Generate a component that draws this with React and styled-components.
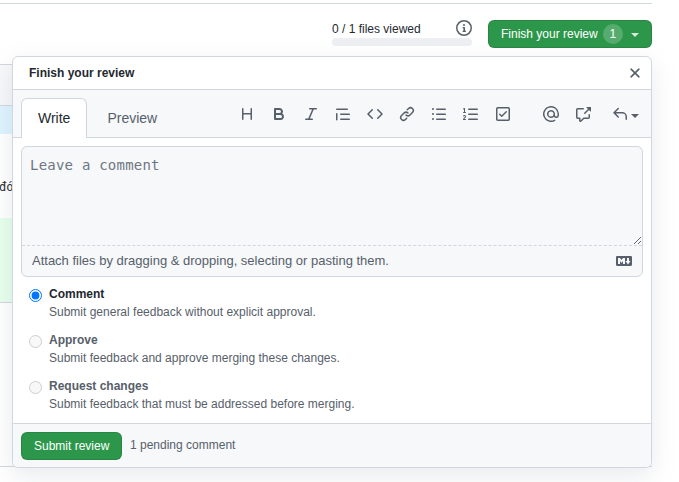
import React from "react";
import styled, { createGlobalStyle } from "styled-components";

const color = {
  fg: "#24292f",
  muted: "#57606a",
  border: "#d0d7de",
  subtle: "#f6f8fa",
  green: "#2c974b",
};

const GlobalStyle = createGlobalStyle`
  * { box-sizing: border-box; }
  body {
    margin: 0;
    background: #fff;
    color: ${color.fg};
    font: 12px/18px "Liberation Sans", Arial, sans-serif;
    overflow: hidden;
  }
`;

const PATHS = {
  info: "M8 1.5a6.5 6.5 0 100 13 6.5 6.5 0 000-13zM0 8a8 8 0 1116 0A8 8 0 010 8zm6.5-.25A.75.75 0 017.25 7h1a.75.75 0 01.75.75v2.75h.25a.75.75 0 010 1.5h-2a.75.75 0 010-1.5h.25v-2h-.25a.75.75 0 01-.75-.75zM8 6a1 1 0 100-2 1 1 0 000 2z",
  x: "M3.72 3.72a.75.75 0 011.06 0L8 6.94l3.22-3.22a.75.75 0 111.06 1.06L9.06 8l3.22 3.22a.75.75 0 11-1.06 1.06L8 9.06l-3.22 3.22a.75.75 0 01-1.06-1.06L6.94 8 3.72 4.78a.75.75 0 010-1.06z",
  heading: "M3.75 2a.75.75 0 01.75.75V7h7V2.75a.75.75 0 011.5 0v10.5a.75.75 0 01-1.5 0V8.5h-7v4.75a.75.75 0 01-1.5 0V2.75A.75.75 0 013.75 2z",
  bold: "M4 2a1 1 0 00-1 1v10a1 1 0 001 1h5.5a3.5 3.5 0 001.852-6.47A3.5 3.5 0 008.5 2H4zm4.5 5a1.5 1.5 0 100-3H5v3h3.5zM5 9v3h4.5a1.5 1.5 0 000-3H5z",
  italic: "M6 2.75A.75.75 0 016.75 2h6.5a.75.75 0 010 1.5h-2.505l-3.858 9H9.25a.75.75 0 010 1.5h-6.5a.75.75 0 010-1.5h2.505l3.858-9H6.75A.75.75 0 016 2.75z",
  quote: "M1.75 2.5a.75.75 0 000 1.5h10.5a.75.75 0 000-1.5H1.75zm4 5a.75.75 0 000 1.5h8.5a.75.75 0 000-1.5h-8.5zm0 5a.75.75 0 000 1.5h8.5a.75.75 0 000-1.5h-8.5zM2.5 7.75a.75.75 0 00-1.5 0v6a.75.75 0 001.5 0v-6z",
  code: "M4.72 3.22a.75.75 0 011.06 1.06L2.06 8l3.72 3.72a.75.75 0 11-1.06 1.06L.47 8.53a.75.75 0 010-1.06l4.25-4.25zm6.56 0a.75.75 0 10-1.06 1.06L13.94 8l-3.72 3.72a.75.75 0 101.06 1.06l4.25-4.25a.75.75 0 000-1.06l-4.25-4.25z",
  link: "M7.775 3.275a.75.75 0 001.06 1.06l1.25-1.25a2 2 0 112.83 2.83l-2.5 2.5a2 2 0 01-2.83 0 .75.75 0 00-1.06 1.06 3.5 3.5 0 004.95 0l2.5-2.5a3.5 3.5 0 00-4.95-4.95l-1.25 1.25zm-4.69 9.64a2 2 0 010-2.83l2.5-2.5a2 2 0 012.83 0 .75.75 0 001.06-1.06 3.5 3.5 0 00-4.95 0l-2.5 2.5a3.5 3.5 0 004.95 4.95l1.25-1.25a.75.75 0 00-1.06-1.06l-1.25 1.25a2 2 0 01-2.83 0z",
  bullets: "M2 4a1 1 0 100-2 1 1 0 000 2zm3.75-1.5a.75.75 0 000 1.5h8.5a.75.75 0 000-1.5h-8.5zm0 5a.75.75 0 000 1.5h8.5a.75.75 0 000-1.5h-8.5zm0 5a.75.75 0 000 1.5h8.5a.75.75 0 000-1.5h-8.5zM3 8a1 1 0 11-2 0 1 1 0 012 0zm-1 6a1 1 0 100-2 1 1 0 000 2z",
  numbers: "M2.003 2.5a.5.5 0 00-.723-.447l-1.003.5a.5.5 0 00.446.895l.28-.14V6H.5a.5.5 0 000 1h2.006a.5.5 0 100-1h-.503V2.5zM5 3.25a.75.75 0 01.75-.75h8.5a.75.75 0 010 1.5h-8.5A.75.75 0 015 3.25zm0 5a.75.75 0 01.75-.75h8.5a.75.75 0 010 1.5h-8.5A.75.75 0 015 8.25zm0 5a.75.75 0 01.75-.75h8.5a.75.75 0 010 1.5h-8.5a.75.75 0 01-.75-.75zM.924 10.32l.003-.004a.851.851 0 01.144-.153A.66.66 0 011.5 10c.195 0 .306.068.374.146a.57.57 0 01.128.376c0 .453-.269.682-.8 1.078l-.035.025C.692 11.98 0 12.495 0 13.5a.5.5 0 00.5.5h2.003a.5.5 0 000-1H1.146c.132-.197.351-.372.654-.597l.047-.035c.47-.35 1.156-.858 1.156-1.845 0-.365-.118-.744-.377-1.038-.268-.303-.658-.484-1.126-.484-.48 0-.84.202-1.068.392a1.858 1.858 0 00-.348.384l-.007.011a.5.5 0 00.847.533z",
  tasks: "M2.5 2.75a.25.25 0 01.25-.25h10.5a.25.25 0 01.25.25v10.5a.25.25 0 01-.25.25H2.75a.25.25 0 01-.25-.25V2.75zM2.75 1A1.75 1.75 0 001 2.75v10.5c0 .966.784 1.75 1.75 1.75h10.5A1.75 1.75 0 0015 13.25V2.75A1.75 1.75 0 0013.25 1H2.75zm9.03 5.28a.75.75 0 00-1.06-1.06L6.75 9.19 5.28 7.72a.75.75 0 00-1.06 1.06l2 2a.75.75 0 001.06 0l4.5-4.5z",
  mention: "M4.75 2.37a6.5 6.5 0 006.5 11.26.75.75 0 01.75 1.298 8 8 0 113.994-7.273.754.754 0 01.006.095v1.5a2.75 2.75 0 01-5.072 1.475A4 4 0 1112 8v1.25a1.25 1.25 0 002.5 0V7.867a6.5 6.5 0 00-9.75-5.496V2.37zM10.5 8a2.5 2.5 0 10-5 0 2.5 2.5 0 005 0z",
  reference: "M16 1.25v4.146a.25.25 0 01-.427.177L14.03 4.03l-3.75 3.75a.75.75 0 11-1.06-1.06l3.75-3.75-1.543-1.543A.25.25 0 0111.604 1h4.146a.25.25 0 01.25.25zM2.75 3.5a.25.25 0 00-.25.25v7.5c0 .138.112.25.25.25h2a.75.75 0 01.75.75v2.19l2.72-2.72a.75.75 0 01.53-.22h4.5a.25.25 0 00.25-.25v-2.5a.75.75 0 111.5 0v2.5A1.75 1.75 0 0113.25 13H9.06l-2.573 2.573A1.457 1.457 0 014 14.543V13H2.75A1.75 1.75 0 011 11.25v-7.5C1 2.784 1.784 2 2.75 2h5.5a.75.75 0 010 1.5h-5.5z",
  reply: "M6.78 1.97a.75.75 0 010 1.06L3.81 6h6.44A4.75 4.75 0 0115 10.75v2.5a.75.75 0 01-1.5 0v-2.5a3.25 3.25 0 00-3.25-3.25H3.81l2.97 2.97a.75.75 0 11-1.06 1.06L1.47 7.28a.75.75 0 010-1.06l4.25-4.25a.75.75 0 011.06 0z",
  markdown: "M14.85 3H1.15C.52 3 0 3.52 0 4.15v7.69C0 12.48.52 13 1.15 13h13.69c.64 0 1.15-.52 1.15-1.15v-7.7C16 3.52 15.48 3 14.85 3zM9 11H7V8L5.5 9.92 4 8v3H2V5h2l1.5 2L7 5h2v6zm2.99.5L9.5 8H11V5h2v3h1.5l-2.51 3.5z",
};

const Svg = styled.svg`
  display: block;
  flex: none;
  fill: ${color.muted};
  stroke: ${color.muted};
  stroke-width: ${(p) => (p.$heavy ? 0.35 : 0)};
`;

function Icon({ name, heavy }) {
  return (
    <Svg $heavy={heavy} width="16" height="16" viewBox="0 0 16 16" aria-hidden="true">
      <path fillRule="evenodd" d={PATHS[name]} />
    </Svg>
  );
}

const Page = styled.div`
  position: relative;
  width: 679px;
  height: 482px;
  overflow: hidden;
`;

const TopBar = styled.header`
  display: flex;
  justify-content: flex-end;
  gap: 16px;
  width: 652px;
  height: 61px;
  margin-top: 3px;
  padding-top: 16px;
  border-top: 1px solid ${color.border};
`;

const Viewed = styled.div`
  width: 140px;
`;

const ViewedRow = styled.div`
  display: flex;
  justify-content: space-between;
  height: 18px;
`;

const Progress = styled.div`
  height: 8px;
  border-radius: 6px;
  background: #eeeff2;
`;

const GreenButton = styled.button`
  display: flex;
  align-items: center;
  width: ${(p) => p.$width}px;
  height: 28px;
  padding: 0 12px;
  border: 1px solid rgba(27, 31, 36, 0.15);
  border-radius: 6px;
  background: ${color.green};
  color: #fff;
  font: inherit;
  line-height: 20px;
  white-space: nowrap;
`;

const Counter = styled.span`
  width: 21px;
  height: 20px;
  margin-left: 5px;
  border-radius: 20px;
  background: rgba(255, 255, 255, 0.2);
  text-align: center;
`;

const Caret = styled.span`
  width: 0;
  height: 0;
  margin: ${(p) => p.$drop}px 0 0 ${(p) => p.$gap}px;
  border: 4px solid transparent;
  border-top-color: ${(p) => p.$tone};
  border-bottom: 0;
`;

const DiffFile = styled.section`
  width: 652px;
  height: 239px;
  border: solid ${color.border};
  border-width: 1px 0;
`;

const DiffHeader = styled.div`
  height: 41px;
  background: ${color.subtle};
  border-bottom: 1px solid ${color.border};
`;

const DiffRow = styled.div`
  height: ${(p) => p.$height}px;
  background: ${(p) => p.$fill || "#fff"};
  font: 12px/20px "DejaVu Sans Mono", monospace;
`;

const CodeText = styled.span`
  display: block;
  margin-left: -1px;
  padding-top: 43px;
`;

const NextFile = styled.section`
  width: 652px;
  height: 164px;
  border-bottom: 1px solid ${color.border};
`;

const Popover = styled.div`
  position: absolute;
  top: 56px;
  left: 12px;
  display: flex;
  flex-direction: column;
  width: 640px;
  height: 412px;
  border: 1px solid ${color.border};
  border-radius: 6px;
  background: #fff;
  box-shadow: 0 8px 24px rgba(140, 149, 159, 0.2);
`;

const PopoverHeader = styled.div`
  display: flex;
  align-items: center;
  justify-content: space-between;
  height: 33px;
  padding: 0 8px 0 16px;
  border-bottom: 1px solid ${color.border};
`;

const Title = styled.span`
  font-weight: 700;
`;

const TabBar = styled.div`
  display: flex;
  align-items: flex-end;
  flex: none;
  height: 48px;
  padding-left: 8px;
  background: ${color.subtle};
  box-shadow: inset 0 -1px ${color.border};
`;

const Tab = styled.button`
  height: 40px;
  padding: 0 ${(p) => (p.$active ? 16 : 19)}px;
  border: 1px solid ${(p) => (p.$active ? color.border : "transparent")};
  border-bottom: 0;
  border-radius: 6px 6px 0 0;
  background: ${(p) => (p.$active ? "#fff" : "transparent")};
  color: ${(p) => (p.$active ? color.fg : color.muted)};
  font: 14px/23px "Liberation Sans", Arial, sans-serif;
`;

const Tools = styled.div`
  display: flex;
  align-items: center;
  gap: 16px;
  height: 48px;
  margin-left: auto;
  padding-right: 12px;
`;

const ToolGroup = styled.div`
  display: flex;
  gap: 16px;
  margin-right: ${(p) => p.$after || 0}px;
`;

const ReplyTool = styled.div`
  display: flex;
  align-items: center;
`;

const Editor = styled.div`
  display: flex;
  flex-direction: column;
  flex: none;
  height: 131px;
  margin: 8px 8px 0;
  border: 1px solid ${color.border};
  border-radius: 6px;
  background: ${color.subtle};
`;

const TextArea = styled.textarea`
  display: block;
  width: 100%;
  height: 99px;
  padding: 8px;
  border: 0;
  border-bottom: 1px dashed ${color.border};
  border-radius: 6px 6px 0 0;
  outline: 0;
  background: transparent;
  resize: vertical;
  font: 14px/21px "DejaVu Sans Mono", monospace;
  letter-spacing: 0.22px;
  &::placeholder { color: #6e7781; opacity: 1; }
`;

const AttachRow = styled.div`
  display: flex;
  align-items: center;
  justify-content: space-between;
  flex: 1;
  padding: 0 10px;
  color: ${color.muted};
  font-size: 13px;
`;

const Options = styled.div`
  display: flex;
  flex-direction: column;
  gap: 10px;
  flex: 1;
  padding: 8px 16px 0;
`;

const Option = styled.label`
  display: grid;
  grid-template-columns: 13px 1fr;
  column-gap: 7px;
  height: 36px;
  color: ${color.muted};
`;

const Radio = styled.input`
  width: 13px;
  height: 13px;
  margin: 4px 0 0;
`;

const OptionName = styled.span`
  font-weight: 700;
  color: ${(p) => (p.$on ? color.fg : color.muted)};
`;

const OptionHint = styled.span`
  grid-column: 2;
`;

const Footer = styled.div`
  display: flex;
  align-items: center;
  gap: 8px;
  height: 44px;
  padding: 0 8px;
  border-top: 1px solid ${color.border};
  border-radius: 0 0 5px 5px;
  background: ${color.subtle};
  color: ${color.muted};
`;

const Pending = styled.span`
  padding-bottom: 2px;
`;

const OPTIONS = [
  ["Comment", "Submit general feedback without explicit approval."],
  ["Approve", "Submit feedback and approve merging these changes."],
  ["Request changes", "Submit feedback that must be addressed before merging."],
];

export default function App() {
  return (
    <Page>
      <GlobalStyle />
      <TopBar>
        <Viewed>
          <ViewedRow>
            <span>0 / 1 files viewed</span>
            <Icon name="info" />
          </ViewedRow>
          <Progress />
        </Viewed>
        <GreenButton $width={164}>
          Finish your review
          <Counter>1</Counter>
          <Caret $gap={8} $drop={2} $tone="rgba(255,255,255,0.8)" />
        </GreenButton>
      </TopBar>

      <DiffFile>
        <DiffHeader />
        <DiffRow $height={28} $fill="#ddf4ff" />
        <DiffRow $height={84}>
          <CodeText>đó</CodeText>
        </DiffRow>
        <DiffRow $height={84} $fill="#e6ffec" />
      </DiffFile>
      <NextFile />

      <Popover>
        <PopoverHeader>
          <Title>Finish your review</Title>
          <Icon name="x" heavy />
        </PopoverHeader>
        <TabBar>
          <Tab $active>Write</Tab>
          <Tab>Preview</Tab>
          <Tools>
            <ToolGroup $after={16}>
              {["heading", "bold", "italic", "quote", "code", "link", "bullets", "numbers", "tasks"].map((n) => (
                <Icon key={n} name={n} />
              ))}
            </ToolGroup>
            <ToolGroup $after={5}>
              <Icon name="mention" />
              <Icon name="reference" />
            </ToolGroup>
            <ReplyTool>
              <Icon name="reply" />
              <Caret $gap={3} $drop={4} $tone={color.muted} />
            </ReplyTool>
          </Tools>
        </TabBar>
        <Editor>
          <TextArea placeholder="Leave a comment" />
          <AttachRow>
            <span>Attach files by dragging &amp; dropping, selecting or pasting them.</span>
            <Icon name="markdown" />
          </AttachRow>
        </Editor>
        <Options>
          {OPTIONS.map(([name, hint], i) => (
            <Option key={name}>
              <Radio type="radio" name="verdict" defaultChecked={i === 0} disabled={i > 0} />
              <OptionName $on={i === 0}>{name}</OptionName>
              <OptionHint>{hint}</OptionHint>
            </Option>
          ))}
        </Options>
        <Footer>
          <GreenButton $width={101}>Submit review</GreenButton>
          <Pending>1 pending comment</Pending>
        </Footer>
      </Popover>
    </Page>
  );
}
